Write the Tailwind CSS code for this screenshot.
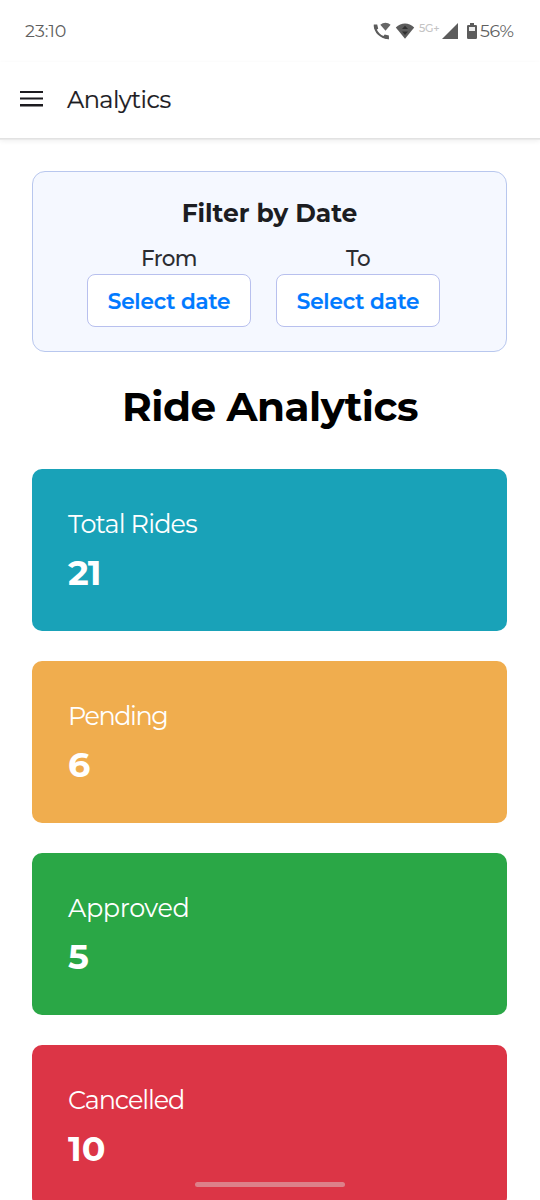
<!DOCTYPE html>
<html lang="en">
<head>
<meta charset="utf-8">
<title>Analytics</title>
<script src="https://cdn.jsdelivr.net/npm/@tailwindcss/browser@4"></script>
</head>
<body class="relative h-[1200px] w-[540px] overflow-hidden bg-white font-['Montserrat','Inter',sans-serif]">
<div class="flex h-[62px] items-center justify-between pl-[25px] pr-[26px] text-[17.500px] text-[#5f5f5f]">
  <span class="pt-px">23:10</span>
  <div class="flex items-center">
    <svg class="h-[18px] w-[18px]" viewBox="0 0 18 18" fill="none"><path d="M2 3C1.600 9.800 7.700 16 15.500 16.200" stroke="#5c5c5c" stroke-width="2"/><path d="M.8 2.500h3.400l1 4.200-2.700 1.500C1 6.500.5 4.500.8 2.500ZM15.900 17.300v-3.700l-4.200-1-2 2.500c2 1.500 4 2.200 6.200 2.200Z" fill="#5c5c5c"/><path d="M7.300 2.800c3-2.700 7.200-2.700 10.300 0L12.500 8.700Z" fill="#666"/></svg>
    <svg class="ml-[4px] h-[16px] w-[20px]" viewBox="0 0 20 16"><path d="M.8 4.500C6.300-.7 13.700-.7 19.200 4.500L10 15.700Z" fill="#5c5c5c"/><path d="M10 2.800 13 6H7ZM10 12 7 8.500h6Z" fill="#303030"/></svg>
    <span class="ml-[4px] mb-[5px] w-[22px] whitespace-nowrap text-[11px] leading-none font-medium tracking-[-0.300px] text-[#c4c4c4]">5G+</span>
    <svg class="ml-[1px] h-[16px] w-[16px]" viewBox="0 0 16 16"><path d="M0 16 16 0v16Z" fill="#5c5c5c"/></svg>
    <svg class="ml-[9px] h-[16px] w-[10px]" viewBox="0 0 10 16"><path d="M3 0h4v2h1.800Q10 2 10 3.200v11.600q0 1.200-1.200 1.200H1.200Q0 16 0 14.800V3.200Q0 2 1.200 2H3Z" fill="#5c5c5c"/><path d="M2 4h6v4H2Z" fill="#eee"/></svg>
    <span class="ml-[3px] w-[34px] pt-px whitespace-nowrap tracking-[-0.400px]">56%</span>
  </div>
</div>
<header class="flex h-[77px] items-center border-b border-[#e2e2e2] pb-[2px] pl-[20px] shadow-[0_1px_0_#eaeaea,0_2px_5px_rgba(0,0,0,0.07)]">
  <svg class="h-[16px] w-[23px]" viewBox="0 0 23 16" fill="#1c1b1f"><path d="M0 0h23v2H0ZM0 6.500h23v2H0ZM0 13h23v2.500H0Z"/></svg>
  <h1 class="ml-[24px] pt-px text-[24px] tracking-[-0.550px] text-[#1c1b1f] [-webkit-text-stroke:0.2px]">Analytics</h1>
</header>
<main class="px-[32px] pt-[32px]">
  <section class="h-[181px] w-[475px] rounded-[13px] border-[1.500px] border-[#b8c7ee] bg-[#f5f8ff] pt-[25px]">
    <h2 class="text-center text-[25px] leading-[32px] font-bold tracking-[-0.050px] text-[#1c1d22]">Filter by Date</h2>
    <div class="mt-[15px] flex w-[461px] justify-center gap-[25px]">
      <div class="text-center"><p class="text-[21.500px] leading-[29px] font-medium tracking-[-0.600px] text-[#2b2c31]">From</p><button class="mt-px block h-[53px] w-[164px] rounded-[8px] border border-[#b8c0ee] bg-white pt-[2px] text-[21.500px] font-semibold tracking-[-0.150px] text-[#007aff] [-webkit-text-stroke:0.2px]">Select date</button></div>
      <div class="text-center"><p class="text-[21.500px] leading-[29px] font-medium tracking-[-0.600px] text-[#2b2c31]">To</p><button class="mt-px block h-[53px] w-[164px] rounded-[8px] border border-[#b8c0ee] bg-white pt-[2px] text-[21.500px] font-semibold tracking-[-0.150px] text-[#007aff] [-webkit-text-stroke:0.2px]">Select date</button></div>
    </div>
  </section>
  <h2 class="mt-[29px] text-center text-[40.500px] leading-[52px] font-bold tracking-[-0.500px] text-black">Ride Analytics</h2>
  <div class="mt-[36px] flex flex-col gap-[30px] text-white">
    <section class="h-[162px] w-[475px] rounded-[10px] bg-[#19a2b8] px-[36px] pt-[38px]"><p class="text-[25.500px] leading-[34px] tracking-[-0.850px]">Total Rides</p><p class="mt-[9px] text-[35px] leading-[46px] font-bold tracking-[-0.800px]">21</p></section>
    <section class="h-[162px] w-[475px] rounded-[10px] bg-[#f0ad4e] px-[36px] pt-[38px]"><p class="text-[25.500px] leading-[34px] tracking-[-1.450px]">Pending</p><p class="mt-[9px] text-[35px] leading-[46px] font-bold">6</p></section>
    <section class="h-[162px] w-[475px] rounded-[10px] bg-[#2aa746] px-[36px] pt-[38px]"><p class="text-[25.500px] leading-[34px] tracking-[-0.400px]">Approved</p><p class="mt-[9px] text-[35px] leading-[46px] font-bold">5</p></section>
    <section class="h-[162px] w-[475px] rounded-[10px] bg-[#dc3546] px-[36px] pt-[38px]"><p class="text-[25.500px] leading-[34px] tracking-[-1.100px]">Cancelled</p><p class="mt-[9px] text-[35px] leading-[46px] font-bold">10</p></section>
  </div>
</main>
<div class="absolute top-[1182px] left-[195px] h-[5px] w-[150px] rounded-full bg-[#dd8089]"></div>
</body>
</html>
